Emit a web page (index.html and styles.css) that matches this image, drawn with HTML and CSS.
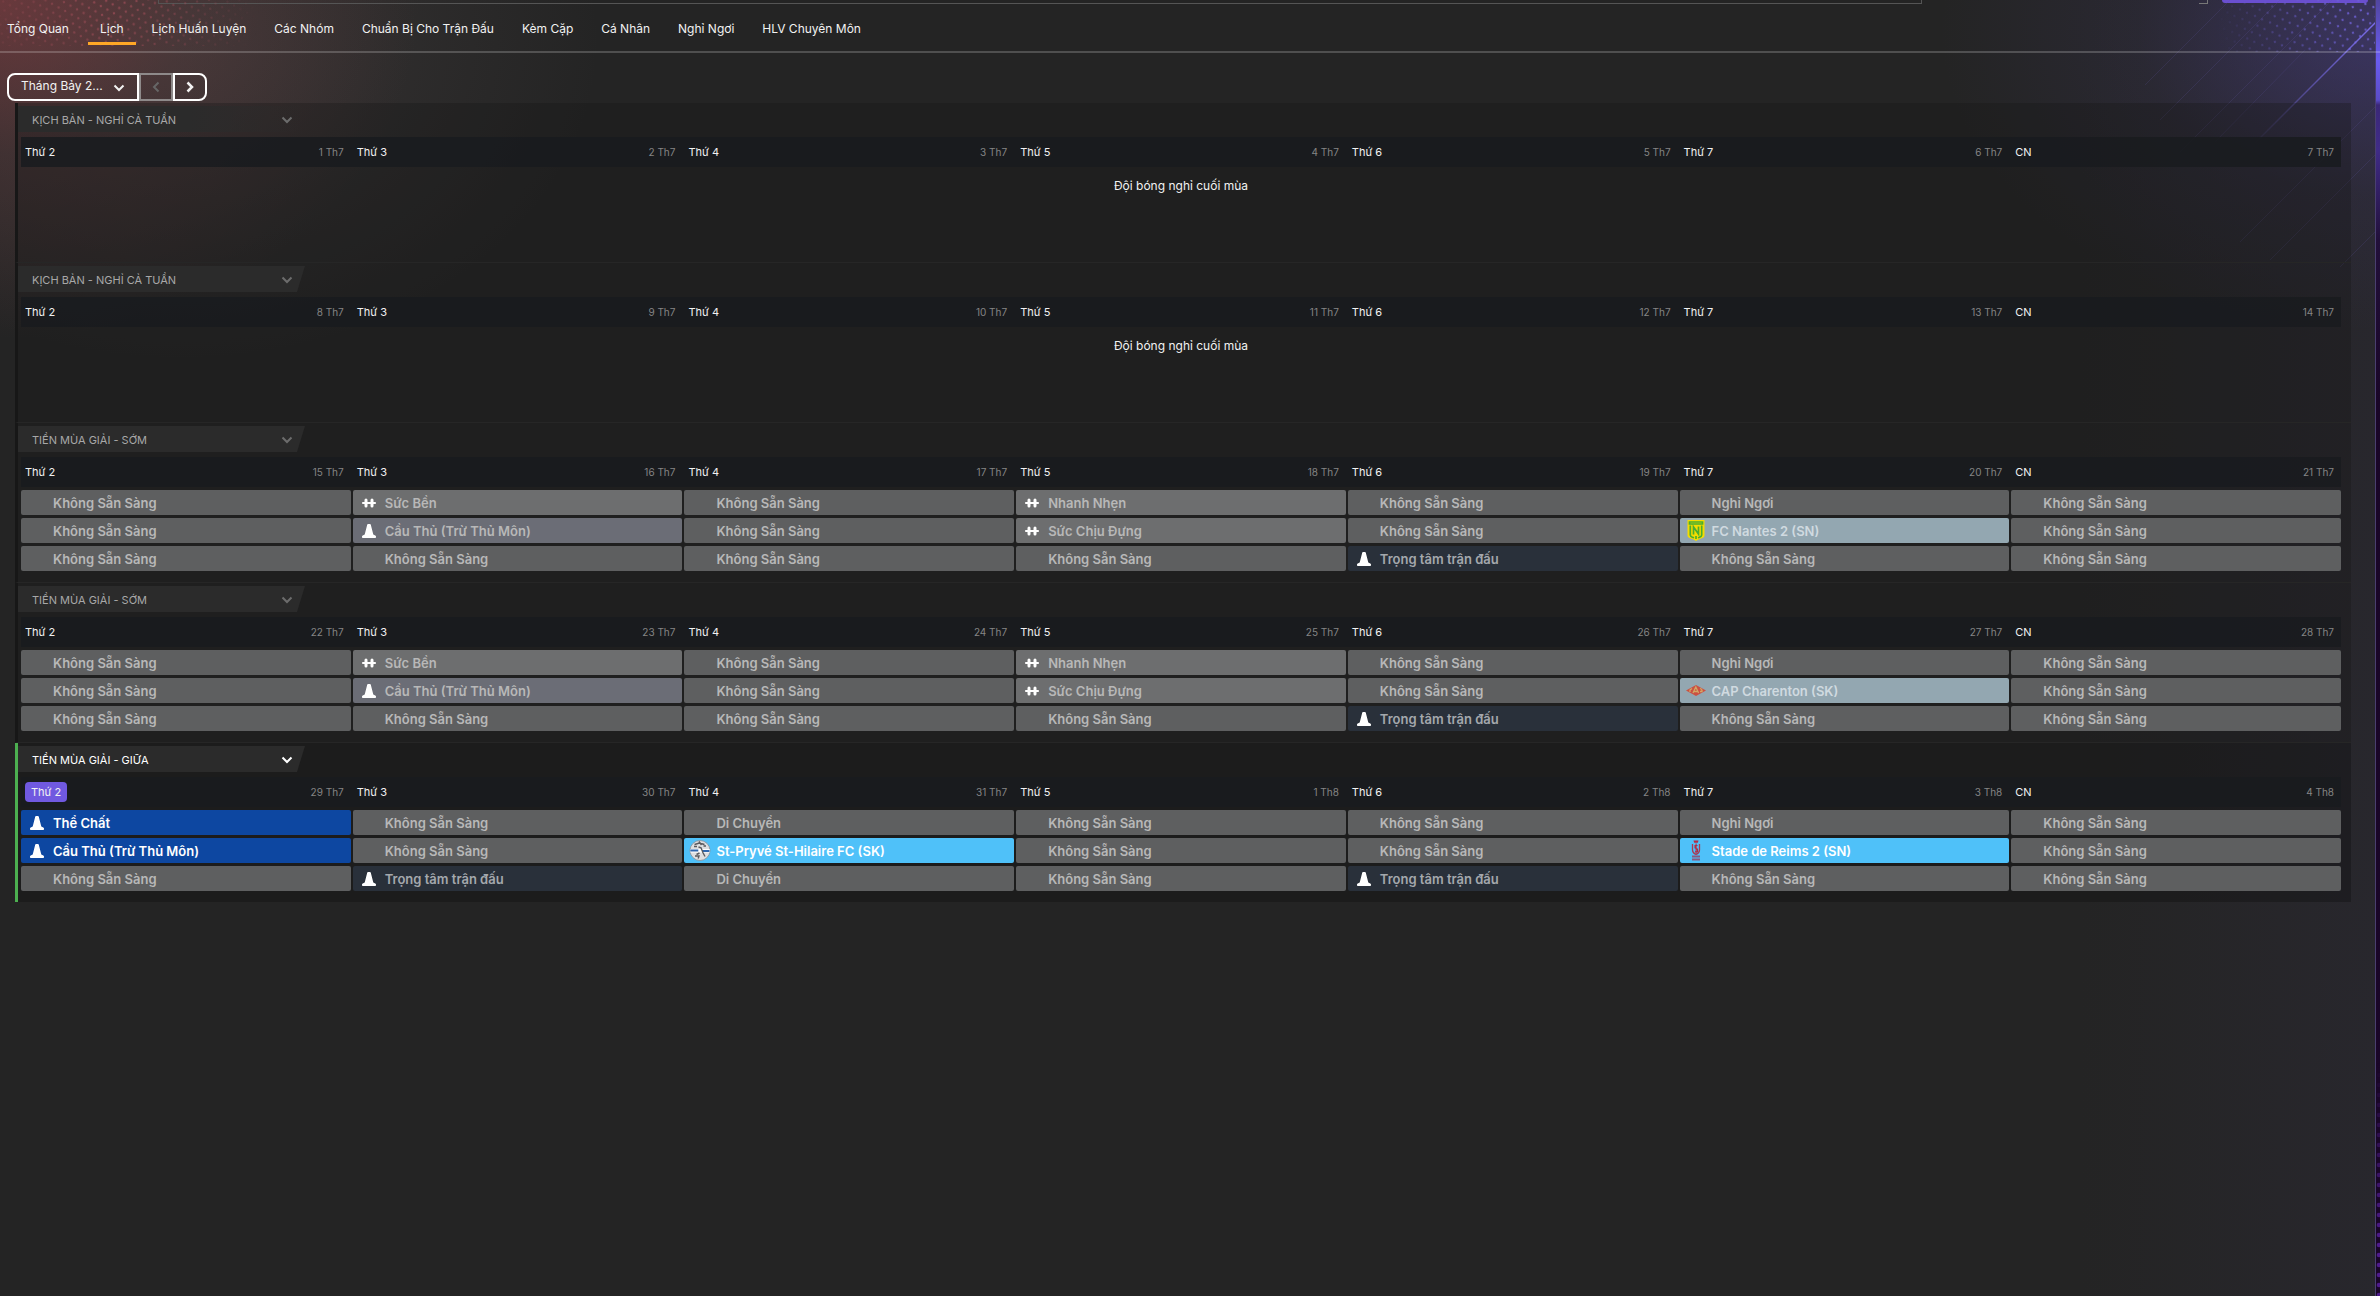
FILE: index.html
```html
<!DOCTYPE html>
<html lang="vi">
<head>
<meta charset="utf-8">
<meta name="viewport" content="width=device-width, initial-scale=1">
<title>Lịch</title>
<link rel="stylesheet" href="styles.css">
</head>
<body>
<svg class="symbols" width="0" height="0" aria-hidden="true">
  <symbol id="chevron-down" viewBox="0 0 12 8"><path d="M1.5 1.5 6 6l4.500-4.500" fill="none" stroke="currentColor" stroke-width="2"/></symbol>
  <symbol id="chevron-left" viewBox="0 0 8 12"><path d="M6.500 1.500 2 6l4.500 4.500" fill="none" stroke="currentColor" stroke-width="2"/></symbol>
  <symbol id="chevron-right" viewBox="0 0 8 12"><path d="M1.500 1.500 6 6 1.500 10.500" fill="none" stroke="currentColor" stroke-width="2.500"/></symbol>
  <symbol id="cone" viewBox="0 0 14 14"><path d="M5.200.8Q5.400 0 6 0h2q.6 0 .8.800L11.300 10.500l2 1q.7.400.7 1v.7q0 .8-.8.8H.8q-.8 0-.8-.8v-.7q0-.6.700-1l2-1z" fill="#fff"/></symbol>
  <symbol id="dumbbell" viewBox="0 0 14 10"><path d="M1 5h12" stroke="#fff" stroke-width="2.200" stroke-linecap="round"/><path d="M4 2v6M10 2v6" stroke="#fff" stroke-width="3" stroke-linecap="round"/></symbol>
  <symbol id="nantes" viewBox="0 0 21 21"><path d="M2 0h17v15.500q0 1.500-2 2.500l-3.500 1.200L10.500 21l-3-1.800L4 18q-2-1-2-2.500z" fill="#f5dc00"/><path d="M4 2h13v2H4zM4.800 5.500v9.500q0 1.500 2 2.200l1.700.6M16.200 5.500v9.500q0 1.500-2 2.200l-1.700.6M8 14.500V7l5 7V6.500M10.500 16v3" fill="none" stroke="#4aae2f" stroke-width="1.700"/></symbol>
  <symbol id="charenton" viewBox="0 0 21 21"><path d="M.5 10.500 10.500 5l10 5.500-10 5.500z" fill="#cb5142"/><path d="M4.500 12V10l2-1.500M7.500 13l2.800-6 2.800 6M8.500 11.500h4M14.500 8.500q2.500.8 2 3h-2" fill="none" stroke="#d3a765" stroke-width="1.300"/></symbol>
  <symbol id="hilaire" viewBox="0 0 21 21"><circle cx="10.500" cy="10.500" r="10" fill="#dedfe1" stroke="#8d9299" stroke-width=".8"/><path d="M.8 9h19.400v3.500H.8z" fill="#fff"/><path d="M.8 10.500h8M12.500 11H20" fill="none" stroke="#2e66ae" stroke-width="1.800"/><path d="M5 4.500 10 3l5 1.500M9 7l2.500.8 2 5 2 3.700M7 14.500l3-1.500M5.500 16h4l-.8 2.500M9.500 1.500l2.500 3.500M4.500 6.500h3M14 6h2.500" fill="none" stroke="#5a5a5e" stroke-width="1.400"/></symbol>
  <symbol id="reims" viewBox="0 0 21 21"><path d="M8 .5h5l-.7 2.300H8.700z" fill="#b52a43"/><path d="M7 4v6q0 3 3.500 4.500Q14 13 14 10V4" fill="none" stroke="#a73b55" stroke-width="1.300"/><path d="M12 5.500H9.500v2.500l2.500 1.200v2.500H9.500M10.600 3.500v10" fill="none" stroke="#b52a43" stroke-width="1.100"/><path d="M6.500 15.500h8v2h-8zM6.500 18.500h8V20.500h-8z" fill="#8a5a80"/></symbol>
</svg>

<svg class="glow glow-left" width="300" height="46" aria-hidden="true">
  <defs>
    <pattern id="dots-red" width="12" height="9" patternUnits="userSpaceOnUse" patternTransform="rotate(-8)"><circle cx="3" cy="2" r="1.200" fill="#a8505c"/><circle cx="9" cy="6.500" r="1.200" fill="#a8505c"/></pattern>
    <radialGradient id="fade-red" gradientUnits="userSpaceOnUse" cx="110" cy="0" r="150"><stop offset="0" stop-color="#fff" stop-opacity=".7"/><stop offset="1" stop-color="#fff" stop-opacity="0"/></radialGradient>
    <mask id="mask-red"><rect width="300" height="46" fill="url(#fade-red)"/></mask>
  </defs>
  <rect width="300" height="46" fill="url(#dots-red)" mask="url(#mask-red)"/>
</svg>
<svg class="glow glow-right" width="400" height="300" aria-hidden="true">
  <defs>
    <pattern id="dots-violet" width="13" height="10" patternUnits="userSpaceOnUse" patternTransform="rotate(-14)"><circle cx="3" cy="2" r="1.200" fill="#6c5fd0"/><circle cx="9" cy="7" r="1.200" fill="#6c5fd0"/></pattern>
    <radialGradient id="fade-violet" gradientUnits="userSpaceOnUse" cx="385" cy="5" r="150"><stop offset="0" stop-color="#fff"/><stop offset="1" stop-color="#fff" stop-opacity="0"/></radialGradient>
    <mask id="mask-violet"><rect width="400" height="52" fill="url(#fade-violet)"/></mask>
    <linearGradient id="ray" gradientUnits="userSpaceOnUse" x1="400" y1="20" x2="270" y2="150"><stop offset="0" stop-color="#7b6ef0"/><stop offset=".5" stop-color="#7b6ef0" stop-opacity=".5"/><stop offset="1" stop-color="#7b6ef0" stop-opacity="0"/></linearGradient>
  </defs>
  <rect width="400" height="52" fill="url(#dots-violet)" mask="url(#mask-violet)"/>
  <path d="M400 18 270 148" stroke="url(#ray)" stroke-width="1.500"/>
  <path d="M250 0 165 85M300 0 180 120M352 0 200 152M325 50 235 142" stroke="#5d54a0" stroke-opacity=".2"/>
  <path d="M400 102 260 242M400 150 290 260M400 227 360 267" stroke="#5d54a0" stroke-opacity=".2"/>
</svg>
<svg class="edge" width="6" aria-hidden="true">
  <defs><pattern id="edge-dots" width="6" height="10" patternUnits="userSpaceOnUse"><circle cx="3" cy="5" r="2.300" fill="#4d1a8c"/></pattern>
  <linearGradient id="edge-fade" x2="0" y2="1"><stop offset=".82" stop-color="#fff" stop-opacity="0"/><stop offset=".96" stop-color="#fff"/></linearGradient>
  <mask id="edge-mask"><rect width="6" height="100%" fill="url(#edge-fade)"/></mask></defs>
  <rect width="6" height="100%" fill="url(#edge-dots)" mask="url(#edge-mask)"/>
</svg>

<div class="topbar" aria-hidden="true">
  <div class="topbar-field"></div>
  <div class="topbar-corner"></div>
  <div class="topbar-action"></div>
</div>

<nav class="tabs">
  <a href="#tong-quan">Tổng Quan</a>
  <a href="#lich" class="active" aria-current="page">Lịch</a>
  <a href="#lich-huan-luyen">Lịch Huấn Luyện</a>
  <a href="#cac-nhom">Các Nhóm</a>
  <a href="#chuan-bi">Chuẩn Bị Cho Trận Đấu</a>
  <a href="#kem-cap">Kèm Cặp</a>
  <a href="#ca-nhan">Cá Nhân</a>
  <a href="#nghi-ngoi">Nghỉ Ngơi</a>
  <a href="#hlv">HLV Chuyên Môn</a>
</nav>

<main>
  <div class="month-picker">
    <div class="month">
      <select aria-label="Tháng"><option>Tháng Bảy 2...</option></select>
      <svg class="month-arrow" width="12" height="8"><use href="#chevron-down"/></svg>
    </div>
    <button class="step" type="button" aria-label="Tháng trước" disabled><svg width="8" height="12"><use href="#chevron-left"/></svg></button>
    <button class="step step-next" type="button" aria-label="Tháng sau"><svg width="8" height="12"><use href="#chevron-right"/></svg></button>
  </div>

  <div class="calendar">
    <section class="week">
      <button class="phase phase-soft" type="button"><span>KỊCH BẢN - NGHỈ CẢ TUẦN</span><svg width="12" height="8"><use href="#chevron-down"/></svg></button>
      <table>
        <thead><tr>
          <th>Thứ 2<time>1 Th7</time></th><th>Thứ 3<time>2 Th7</time></th><th>Thứ 4<time>3 Th7</time></th><th>Thứ 5<time>4 Th7</time></th><th>Thứ 6<time>5 Th7</time></th><th>Thứ 7<time>6 Th7</time></th><th>CN<time>7 Th7</time></th>
        </tr></thead>
        <tbody><tr><td class="break" colspan="7">Đội bóng nghỉ cuối mùa</td></tr></tbody>
      </table>
    </section>

    <section class="week">
      <button class="phase" type="button"><span>KỊCH BẢN - NGHỈ CẢ TUẦN</span><svg width="12" height="8"><use href="#chevron-down"/></svg></button>
      <table>
        <thead><tr>
          <th>Thứ 2<time>8 Th7</time></th><th>Thứ 3<time>9 Th7</time></th><th>Thứ 4<time>10 Th7</time></th><th>Thứ 5<time>11 Th7</time></th><th>Thứ 6<time>12 Th7</time></th><th>Thứ 7<time>13 Th7</time></th><th>CN<time>14 Th7</time></th>
        </tr></thead>
        <tbody><tr><td class="break" colspan="7">Đội bóng nghỉ cuối mùa</td></tr></tbody>
      </table>
    </section>

    <section class="week">
      <button class="phase" type="button"><span>TIỀN MÙA GIẢI - SỚM</span><svg width="12" height="8"><use href="#chevron-down"/></svg></button>
      <table>
        <thead><tr>
          <th>Thứ 2<time>15 Th7</time></th><th>Thứ 3<time>16 Th7</time></th><th>Thứ 4<time>17 Th7</time></th><th>Thứ 5<time>18 Th7</time></th><th>Thứ 6<time>19 Th7</time></th><th>Thứ 7<time>20 Th7</time></th><th>CN<time>21 Th7</time></th>
        </tr></thead>
        <tbody>
          <tr>
            <td>Không Sẵn Sàng</td>
            <td class="gym"><svg><use href="#dumbbell"/></svg>Sức Bền</td>
            <td>Không Sẵn Sàng</td>
            <td class="gym"><svg><use href="#dumbbell"/></svg>Nhanh Nhẹn</td>
            <td>Không Sẵn Sàng</td>
            <td>Nghỉ Ngơi</td>
            <td>Không Sẵn Sàng</td>
          </tr>
          <tr>
            <td>Không Sẵn Sàng</td>
            <td class="outfield"><svg><use href="#cone"/></svg>Cầu Thủ (Trừ Thủ Môn)</td>
            <td>Không Sẵn Sàng</td>
            <td class="gym"><svg><use href="#dumbbell"/></svg>Sức Chịu Đựng</td>
            <td>Không Sẵn Sàng</td>
            <td class="match"><svg><use href="#nantes"/></svg>FC Nantes 2 (SN)</td>
            <td>Không Sẵn Sàng</td>
          </tr>
          <tr>
            <td>Không Sẵn Sàng</td>
            <td>Không Sẵn Sàng</td>
            <td>Không Sẵn Sàng</td>
            <td>Không Sẵn Sàng</td>
            <td class="preview"><svg><use href="#cone"/></svg>Trọng tâm trận đấu</td>
            <td>Không Sẵn Sàng</td>
            <td>Không Sẵn Sàng</td>
          </tr>
        </tbody>
      </table>
    </section>

    <section class="week">
      <button class="phase" type="button"><span>TIỀN MÙA GIẢI - SỚM</span><svg width="12" height="8"><use href="#chevron-down"/></svg></button>
      <table>
        <thead><tr>
          <th>Thứ 2<time>22 Th7</time></th><th>Thứ 3<time>23 Th7</time></th><th>Thứ 4<time>24 Th7</time></th><th>Thứ 5<time>25 Th7</time></th><th>Thứ 6<time>26 Th7</time></th><th>Thứ 7<time>27 Th7</time></th><th>CN<time>28 Th7</time></th>
        </tr></thead>
        <tbody>
          <tr>
            <td>Không Sẵn Sàng</td>
            <td class="gym"><svg><use href="#dumbbell"/></svg>Sức Bền</td>
            <td>Không Sẵn Sàng</td>
            <td class="gym"><svg><use href="#dumbbell"/></svg>Nhanh Nhẹn</td>
            <td>Không Sẵn Sàng</td>
            <td>Nghỉ Ngơi</td>
            <td>Không Sẵn Sàng</td>
          </tr>
          <tr>
            <td>Không Sẵn Sàng</td>
            <td class="outfield"><svg><use href="#cone"/></svg>Cầu Thủ (Trừ Thủ Môn)</td>
            <td>Không Sẵn Sàng</td>
            <td class="gym"><svg><use href="#dumbbell"/></svg>Sức Chịu Đựng</td>
            <td>Không Sẵn Sàng</td>
            <td class="match"><svg><use href="#charenton"/></svg>CAP Charenton (SK)</td>
            <td>Không Sẵn Sàng</td>
          </tr>
          <tr>
            <td>Không Sẵn Sàng</td>
            <td>Không Sẵn Sàng</td>
            <td>Không Sẵn Sàng</td>
            <td>Không Sẵn Sàng</td>
            <td class="preview"><svg><use href="#cone"/></svg>Trọng tâm trận đấu</td>
            <td>Không Sẵn Sàng</td>
            <td>Không Sẵn Sàng</td>
          </tr>
        </tbody>
      </table>
    </section>

    <section class="week current">
      <button class="phase" type="button"><span>TIỀN MÙA GIẢI - GIỮA</span><svg width="12" height="8"><use href="#chevron-down"/></svg></button>
      <table>
        <thead><tr>
          <th><span class="today">Thứ 2</span><time>29 Th7</time></th><th>Thứ 3<time>30 Th7</time></th><th>Thứ 4<time>31 Th7</time></th><th>Thứ 5<time>1 Th8</time></th><th>Thứ 6<time>2 Th8</time></th><th>Thứ 7<time>3 Th8</time></th><th>CN<time>4 Th8</time></th>
        </tr></thead>
        <tbody>
          <tr>
            <td class="session"><svg><use href="#cone"/></svg>Thể Chất</td>
            <td>Không Sẵn Sàng</td>
            <td>Di Chuyển</td>
            <td>Không Sẵn Sàng</td>
            <td>Không Sẵn Sàng</td>
            <td>Nghỉ Ngơi</td>
            <td>Không Sẵn Sàng</td>
          </tr>
          <tr>
            <td class="session"><svg><use href="#cone"/></svg>Cầu Thủ (Trừ Thủ Môn)</td>
            <td>Không Sẵn Sàng</td>
            <td class="match"><svg><use href="#hilaire"/></svg>St-Pryvé St-Hilaire FC (SK)</td>
            <td>Không Sẵn Sàng</td>
            <td>Không Sẵn Sàng</td>
            <td class="match"><svg><use href="#reims"/></svg>Stade de Reims 2 (SN)</td>
            <td>Không Sẵn Sàng</td>
          </tr>
          <tr>
            <td>Không Sẵn Sàng</td>
            <td class="preview"><svg><use href="#cone"/></svg>Trọng tâm trận đấu</td>
            <td>Di Chuyển</td>
            <td>Không Sẵn Sàng</td>
            <td class="preview"><svg><use href="#cone"/></svg>Trọng tâm trận đấu</td>
            <td>Không Sẵn Sàng</td>
            <td>Không Sẵn Sàng</td>
          </tr>
        </tbody>
      </table>
    </section>
  </div>
</main>
</body>
</html>
```
FILE: styles.css
```css
* { box-sizing: border-box; }

html { min-height: 100%; background: #242424; }

body {
  position: relative;
  min-height: 100vh;
  margin: 0;
  overflow-x: hidden;
  color: #f2f2f2;
  font-family: Inter, "Noto Sans", sans-serif;
  font-size: 12px;
  line-height: 16px;
  background:
    radial-gradient(ellipse 420px 340px at 0 0, rgba(150, 66, 72, .56), rgba(120, 66, 70, .26) 45%, transparent),
    radial-gradient(ellipse 420px 320px at 180px 40px, rgba(120, 104, 104, .24), transparent),
    radial-gradient(ellipse 440px 300px at 100% 30px, rgba(86, 72, 170, .42), rgba(66, 58, 110, .18) 55%, transparent),
    linear-gradient(to left, #28272d, rgba(36, 36, 38, 0) 300px),
    #242424;
}

button, select { font: inherit; color: inherit; margin: 0; }
a { color: inherit; text-decoration: none; }

.symbols { position: absolute; }
.glow { position: absolute; top: 0; pointer-events: none; }
.glow-left { left: 0; }
.glow-right { right: 0; }

/* Strip of wallpaper that shows past the window's right edge */
.edge {
  position: absolute;
  top: 0;
  right: 0;
  width: 5px;
  height: 100%;
  border-left: 1px solid #4a4070;
  background: linear-gradient(#5146a0, #6a5cf0 60px, #5a4cc8 100px, #3b2878 105px, #402c88 150px, #22103a 240px, #1a0628 400px);
}

.topbar { display: flex; height: 4px; overflow: hidden; }
.topbar-field { flex: 1; margin: 0 277px 0 158px; border: 1px solid #555; border-top: 0; }
.topbar-corner { width: 9px; margin-right: 14px; border: solid #777; border-width: 0 1px 1px 0; }
.topbar-action { width: 146px; height: 3px; margin-right: 12px; border-radius: 0 0 5px 5px; background: #6a4fd0; }

.tabs {
  position: relative;
  display: flex;
  gap: 4px;
  height: 49px;
  padding-bottom: 6px;
  border-bottom: 2px solid rgba(255, 255, 255, .2);
}
.tabs a { min-width: 47px; padding: 17px 12px 0; border-bottom: 3px solid transparent; white-space: nowrap; }
.tabs a:first-child { padding: 17px 15px 0 7px; }
.tabs .active { border-color: #ffa726; }

main { position: relative; padding: 20px 29px 0 7px; }

.month-picker { display: flex; height: 28px; margin-bottom: 2px; }
.month { position: relative; width: 132px; }
.month select {
  width: 100%;
  height: 100%;
  padding: 0 28px 2px 12px;
  border: 2px solid #fff;
  border-radius: 8px 0 0 8px;
  background: transparent;
  appearance: none;
}
.month option { background: #2b2b2b; }
.month-arrow { position: absolute; top: 11px; right: 14px; pointer-events: none; }
.step {
  display: grid;
  place-items: center;
  width: 34px;
  padding: 0;
  border: 2px solid #fff;
  background: transparent;
}
.step:disabled { border-color: #8e8a8a; color: #666; }
.step-next { border-radius: 0 8px 8px 0; }

.calendar { margin-left: 8px; }
.week {
  height: 160px;
  padding: 3px 10px 0 0;
  border-left: 3px solid #171717;
  border-bottom: 1px solid #262626;
  background: rgba(22, 22, 22, .32);
}
.week.current { height: 159px; border-left-color: #4caf50; border-bottom: 0; background: rgba(14, 14, 14, .36); }

.phase {
  display: flex;
  align-items: center;
  justify-content: space-between;
  width: 287px;
  height: 26px;
  padding: 1px 12px 0 14px;
  border: 0;
  color: #a8a8a8;
  font-size: 11px;
  background: #2b2b2b;
  clip-path: polygon(0 0, 100% 0, calc(100% - 8px) 100%, 0 100%);
}
.phase svg { color: #6c6c6c; }
.phase-soft { background: linear-gradient(to right, #2b2b2b 60%, rgba(43, 43, 43, 0)); }
.current .phase, .current .phase svg { color: #fff; }

table { display: block; margin: 5px 0 0 3px; }
thead, tbody { display: block; }
tr { display: grid; grid-template-columns: repeat(7, minmax(0, 1fr)); column-gap: 2px; }
thead tr { height: 30px; background: rgba(25, 27, 31, .85); }
th {
  display: flex;
  align-items: center;
  justify-content: space-between;
  padding: 0 7px 0 4px;
  font-size: 11px;
  font-weight: 400;
}
time { color: #858585; font-size: 10px; }
.today { padding: 2px 6px; margin-right: auto; border-radius: 4px; background: #7059e0; }

tbody tr { margin-top: 3px; }
td {
  display: flex;
  align-items: center;
  height: 25px;
  padding: 0 0 0 32px;
  overflow: hidden;
  border-radius: 2px;
  color: #b8b8b8;
  font-size: 13px;
  font-weight: 600;
  white-space: nowrap;
  background: #5e5f60;
}
td svg { width: 32px; height: 14px; flex: none; margin-left: -32px; }
.gym { background: #6d6e6f; }
.gym svg { height: 10px; }
.outfield { background: #6b6d76; }
.preview { background: #29303a; color: #a4a8ad; }
.match { background: #93a7b1; color: #d0dae0; }
.match svg { height: 21px; }
.session { background: #0d47a1; color: #fff; }
.current .match { background: #4fc1f9; color: #fff; }
.break {
  grid-column: 1 / -1;
  justify-content: center;
  height: 32px;
  padding: 0;
  color: #f2f2f2;
  font-size: 12px;
  font-weight: 400;
  background: none;
}
```
